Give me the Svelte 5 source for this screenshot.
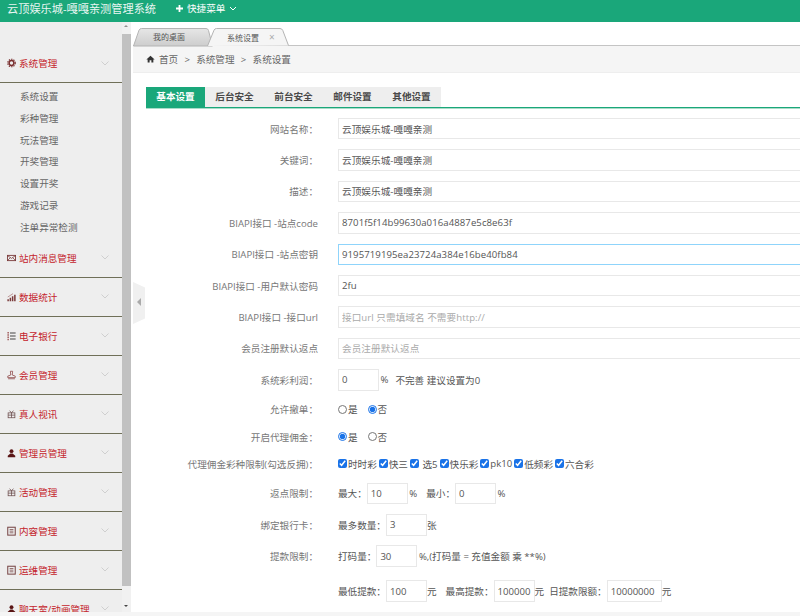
<script lang="ts">
  const menus = [
    { name: "站内消息管理", icon: "mail" },
    { name: "数据统计", icon: "chart" },
    { name: "电子银行", icon: "list" },
    { name: "会员管理", icon: "stamp" },
    { name: "真人视讯", icon: "gift" },
    { name: "管理员管理", icon: "user" },
    { name: "活动管理", icon: "gift" },
    { name: "内容管理", icon: "book" },
    { name: "运维管理", icon: "book" },
    { name: "聊天室/动画管理", icon: "user" },
  ];
  const subItems = ["系统设置", "彩种管理", "玩法管理", "开奖管理", "设置开奖", "游戏记录", "注单异常检测"];
  const formTabs = ["基本设置", "后台安全", "前台安全", "邮件设置", "其他设置"];
  const lotteries = ["时时彩", "快三", "\u00a0选5", "快乐彩", "pk10", "低频彩", "六合彩"];
  const textRows = [
    { label: "网站名称：", value: "云顶娱乐城-嘎嘎亲测" },
    { label: "关键词：", value: "云顶娱乐城-嘎嘎亲测" },
    { label: "描述：", value: "云顶娱乐城-嘎嘎亲测" },
    { label: "BIAPI接口 -站点code", value: "8701f5f14b99630a016a4887e5c8e63f" },
    { label: "BIAPI接口 -站点密钥", value: "9195719195ea23724a384e16be40fb84", focus: true },
    { label: "BIAPI接口 -用户默认密码", value: "2fu" },
    { label: "BIAPI接口 -接口url", value: "", placeholder: "接口url 只需填域名 不需要http://" },
    { label: "会员注册默认返点", value: "", placeholder: "会员注册默认返点" },
  ];
</script>

{#snippet icon(kind: string)}
  <svg class="menu-icon" viewBox="0 0 12 12" aria-hidden="true">
    {#if kind === "gear"}
      <circle cx="6" cy="6" r="3.2" fill="none" stroke="#7a3030" stroke-width="2" />
      <circle cx="6" cy="6" r="5" fill="none" stroke="#7a3030" stroke-width="1.6" stroke-dasharray="1.8 1.4" />
    {:else if kind === "mail"}
      <rect x="0.600" y="2.500" width="10.800" height="7" fill="none" stroke="#7a3a3a" stroke-width="1.200" />
      <path d="M1 3l5 3.500L11 3M1 9l3.500-3.500M11 9L7.500 5.500" fill="none" stroke="#7a3a3a" />
    {:else if kind === "chart"}
      <path d="M1.500 11.500V9M4.500 11.500V7M7.500 11.500V5M10.500 11.500V3" stroke="#7a3a3a" stroke-width="2" />
      <path d="M1 6L5 3.500 8 1.500" fill="none" stroke="#9a5a5a" stroke-width="0.800" />
    {:else if kind === "list"}
      <path d="M1.500 0.500v11" stroke="#8a3030" stroke-width="1.500" stroke-dasharray="2 1" />
      <path d="M4 2h7.500M4 6h7.500M4 10h7.500" stroke="#444" stroke-width="1.400" />
    {:else if kind === "stamp"}
      <path d="M4.500 1h3L7 6l4 1.500V9.500H1V7.500L5 6zM1.500 11h9" fill="none" stroke="#8a4040" />
    {:else if kind === "gift"}
      <rect x="1.500" y="4.500" width="9" height="6.500" fill="none" stroke="#6a4a4a" />
      <path d="M1.500 7.500h9M6 4.500V11M3.500 1.500l2.500 3 2.500-3" fill="none" stroke="#6a4a4a" />
    {:else if kind === "user"}
      <circle cx="6" cy="3.500" r="2.600" fill="#5a1515" />
      <path d="M1 11.500V9.500L4.500 6.800h3l3.500 2.700v2z" fill="#5a1515" />
    {:else}
      <rect x="1" y="1" width="10" height="10.500" fill="none" stroke="#7a4a4a" stroke-width="1.400" />
      <path d="M3.500 4h5M3.500 6.200h5M3.500 8.400h5" stroke="#7a4a4a" />
    {/if}
  </svg>
{/snippet}

{#snippet chevron()}
  <svg class="chevron" viewBox="0 0 8 5" aria-hidden="true"><path d="M.5.500L4 4 7.500.500" fill="none" stroke="#cfcfcf" /></svg>
{/snippet}

<div class="page">
  <header class="topbar">
    <span class="brand">云顶娱乐城-嘎嘎亲测管理系统</span>
    <span class="quick">
      <svg class="plus" viewBox="0 0 9 9" aria-hidden="true"><path d="M4.500 1v7M1 4.500h7" stroke="#fff" stroke-width="1.800" /></svg>
      快捷菜单
      <svg class="caret" viewBox="0 0 8 5" aria-hidden="true"><path d="M1 1l3 3 3-3" fill="none" stroke="#fff" /></svg>
    </span>
  </header>

  <div class="body">
    <aside class="sidebar">
      <div class="side-scroll">
        <div class="menu-head first">
          <span class="menu-title">{@render icon("gear")}系统管理</span>
          {@render chevron()}
        </div>
        <ul class="sub">
          {#each subItems as item}
            <li>{item}</li>
          {/each}
        </ul>
        {#each menus as menu, i}
          <div class="menu-head" class:last={i === menus.length - 1}>
            <span class="menu-title">{@render icon(menu.icon)}{menu.name}</span>
            {@render chevron()}
          </div>
        {/each}
      </div>
      <div class="scrollbar">
        <span class="arrow up"></span>
        <div class="thumb"></div>
        <span class="arrow down"></span>
      </div>
    </aside>

    <div class="gutter">
      <button class="handle" aria-label="收起"></button>
    </div>

    <main class="main">
      <div class="tabbar">
        <span class="page-tab">
          <svg class="tab-shape" viewBox="0 0 80 18" aria-hidden="true">
            <defs>
              <linearGradient id="tabGrey" x1="0" y1="0" x2="0" y2="1">
                <stop offset="0" stop-color="#e6e6e6" />
                <stop offset="1" stop-color="#cdcdcd" />
              </linearGradient>
            </defs>
            <path d="M.5 18L6 2.200Q6.800.500 8.500.500H73Q75 .500 75.500 2.500L79.500 18z" fill="url(#tabGrey)" stroke="#b4b4b4" />
          </svg>
          <span class="tab-text">我的桌面</span>
        </span>
        <span class="page-tab active">
          <svg class="tab-shape" viewBox="0 0 82 18" aria-hidden="true">
            <path d="M.5 18L7 2.200Q7.800.500 9.500.500H73Q75 .500 75.800 2.500L81.500 17.500" fill="#f5f5f5" stroke="#b4b4b4" />
          </svg>
          <span class="tab-text">系统设置</span>
          <i class="close">×</i>
        </span>
      </div>
      <div class="crumbs">
        <svg class="home" viewBox="0 0 12 10" aria-hidden="true"><path d="M6 .5L.5 5.500h1.700V9.500h2.600V6.500h2.400v3h2.600V5.500h1.700z" fill="#333" /></svg>
        <span>首页</span><b>&gt;</b><span>系统管理</span><b>&gt;</b><span>系统设置</span>
      </div>

      <div class="content">
        <div class="tabs">
          {#each formTabs as tab, i}
            <span class="tab" class:on={i === 0}>{tab}</span>
          {/each}
        </div>

        <form class="form">
          {#each textRows as row}
            <div class="row">
              <span class="label">{row.label}</span>
              <span class="field">
                <input class="box wide" class:focus={row.focus} value={row.value} placeholder={row.placeholder ?? ""} />
              </span>
            </div>
          {/each}

          <div class="row">
            <span class="label">系统彩利润：</span>
            <span class="field"><input class="box small" value="0" /><span class="pct">%</span><span class="note">不完善 建议设置为0</span></span>
          </div>
          <div class="row short">
            <span class="label">允许撤单：</span>
            <span class="field radios">
              <label><input type="radio" name="cancel" />是</label>
              <label><input type="radio" name="cancel" checked />否</label>
            </span>
          </div>
          <div class="row short">
            <span class="label">开启代理佣金：</span>
            <span class="field radios">
              <label><input type="radio" name="agent" checked />是</label>
              <label><input type="radio" name="agent" />否</label>
            </span>
          </div>
          <div class="row short">
            <span class="label">代理佣金彩种限制(勾选反拥)：</span>
            <span class="field checks">
              {#each lotteries as item}
                <label><input type="checkbox" checked />{item}</label>
              {/each}
            </span>
          </div>
          <div class="row">
            <span class="label">返点限制：</span>
            <span class="field">最大：<input class="box small" value="10" /><span class="pct">%</span><span class="gap">最小：</span><input class="box small" value="0" /><span class="pct">%</span></span>
          </div>
          <div class="row">
            <span class="label">绑定银行卡：</span>
            <span class="field">最多数量：<input class="box small" value="3" /><span>张</span></span>
          </div>
          <div class="row">
            <span class="label">提款限制：</span>
            <span class="field">打码量：<input class="box small" value="30" /><span class="pct">%,(打码量 = 充值金额 乘 **%)</span></span>
          </div>
          <div class="row last">
            <span class="label"></span>
            <span class="field">最低提款：<input class="box small" value="100" /><span>元</span><span class="gap">最高提款：</span><input class="box small" value="100000" /><span>元</span><span class="gap tight">日提款限额：</span><input class="box big" value="10000000" /><span>元</span></span>
          </div>
        </form>
      </div>
    </main>
  </div>
</div>

<style>
  :global(body) {
    margin: 0;
    background: #fff;
    overflow: hidden;
  }

  .page {
    width: 800px;
    height: 616px;
    display: flex;
    flex-direction: column;
    overflow: hidden;
    font-family: "Open Sans", "Noto Sans CJK SC", sans-serif;
    font-size: 9.6px;
    color: #555;
  }

  .topbar {
    height: 22px;
    flex-shrink: 0;
    box-sizing: border-box;
    display: flex;
    align-items: center;
    padding: 0 0 6px 7px;
    background: #1aa77a;
    color: #fff;
  }

  .brand {
    font-size: 11.200px;
    width: 168px;
    opacity: 0.9;
  }

  .quick {
    display: flex;
    align-items: center;
    gap: 3px;
  }

  .plus {
    width: 9px;
    height: 9px;
  }

  .caret {
    width: 8px;
    height: 5px;
    margin-left: 1px;
  }

  .body {
    flex: 1;
    display: flex;
    min-height: 0;
    padding-bottom: 4px;
    background: #f5f5f5;
  }

  .sidebar {
    width: 131px;
    flex-shrink: 0;
    display: flex;
    background: #eee;
  }

  .side-scroll {
    width: 122px;
    overflow: hidden;
  }

  .menu-head {
    height: 38px;
    display: flex;
    align-items: center;
    justify-content: space-between;
    padding: 0 13px 0 7px;
    border-bottom: 1px solid #6f6f58;
    color: #c4242c;
  }

  .menu-head.first {
    box-sizing: border-box;
    height: 61px;
    padding-top: 22px;
  }

  .menu-head.last {
    border-bottom: none;
  }

  .menu-title {
    display: flex;
    align-items: center;
    gap: 3px;
    white-space: nowrap;
  }

  .menu-icon {
    width: 9px;
    height: 10px;
    flex-shrink: 0;
  }

  .chevron {
    width: 8px;
    height: 5px;
  }

  .sub {
    list-style: none;
    margin: 0;
    padding: 3px 0 0 20px;
    color: #666;
  }

  .sub li {
    height: 21.800px;
    line-height: 21.800px;
  }

  .scrollbar {
    width: 9px;
    display: flex;
    flex-direction: column;
    background: #f1f1f1;
  }

  .arrow {
    height: 12px;
    flex-shrink: 0;
    position: relative;
  }

  .arrow::after {
    content: "";
    position: absolute;
    left: 2px;
    top: 4px;
    border: 2.500px solid transparent;
  }

  .arrow.up::after {
    top: 1px;
    border-bottom-color: #909090;
  }

  .arrow.down {
    margin-top: auto;
  }

  .arrow.down::after {
    top: 5px;
    border-top-color: #444;
  }

  .thumb {
    height: 552px;
    flex-shrink: 0;
    background: #c1c1c1;
  }

  .gutter {
    width: 2px;
    flex-shrink: 0;
    background: #fff;
    position: relative;
    z-index: 2;
  }

  .handle {
    position: absolute;
    left: 2px;
    top: 260px;
    width: 12px;
    height: 42px;
    padding: 0;
    border: none;
    background: #f0f0f0;
    clip-path: polygon(0 0, 100% 13%, 100% 87%, 0 100%);
  }

  .handle::after {
    content: "";
    position: absolute;
    left: 4px;
    top: 16px;
    border: 4.500px solid transparent;
    border-left-width: 0;
    border-right: 4.500px solid #aaa;
  }

  .main {
    flex: 1;
    min-width: 0;
    display: flex;
    flex-direction: column;
    background: #fff;
    overflow: hidden;
  }

  .tabbar {
    box-sizing: border-box;
    height: 24px;
    flex-shrink: 0;
    display: flex;
    align-items: flex-end;
    background: #fff;
    border-bottom: 1px solid #c4c4c4;
  }

  .page-tab {
    position: relative;
    height: 18px;
    width: 80px;
    margin-bottom: -1px;
    flex-shrink: 0;
    font-size: 8px;
    line-height: 18px;
    color: #555;
  }

  .page-tab.active {
    width: 82px;
    margin-left: -6px;
  }

  .tab-shape {
    position: absolute;
    left: 0;
    top: 0;
    width: 100%;
    height: 100%;
    overflow: visible;
  }

  .tab-text {
    position: relative;
    margin-left: 20px;
  }

  .close {
    position: relative;
    font-style: normal;
    color: #aaa;
    margin-left: 8px;
    font-size: 10px;
  }

  .crumbs {
    height: 26px;
    flex-shrink: 0;
    display: flex;
    align-items: center;
    padding-left: 13px;
    background: #f5f5f5;
    border-bottom: 1px solid #eee;
    color: #666;
  }

  .crumbs b {
    font-weight: 400;
    width: 18px;
    text-align: center;
  }

  .home {
    width: 9px;
    height: 8px;
    margin-right: 4px;
  }

  .content {
    flex: 1;
    padding: 14px 0 0 13px;
    background: #fff;
  }

  .tabs {
    width: 660px;
    height: 20px;
    display: flex;
    border-bottom: 1px solid #1aa77a;
    box-shadow: 0 1px 0 #a9dcc9;
  }

  .tab {
    width: 59px;
    line-height: 20px;
    text-align: center;
    font-weight: 600;
    background: #eee;
    color: #4a4a4a;
  }

  .tab.on {
    background: #1aa77a;
    color: #fff;
  }

  .form {
    width: 680px;
    padding-top: 5px;
  }

  .row {
    display: flex;
    align-items: center;
    height: 31.400px;
  }

  .row.short {
    height: 27.400px;
  }

  .row.last {
    margin-top: 3.500px;
  }

  .label {
    width: 192px;
    flex-shrink: 0;
    box-sizing: border-box;
    padding-right: 20px;
    text-align: right;
    color: #777;
    white-space: nowrap;
  }

  .field {
    display: flex;
    align-items: center;
    white-space: nowrap;
    min-width: 0;
  }

  .box {
    font: inherit;
    height: 21.500px;
    box-sizing: border-box;
    padding: 0 3px;
    border: 1px solid #e8e8e8;
    outline: none;
    color: #555;
    background: #fff;
  }

  .box::placeholder {
    color: #aaa;
  }

  .wide {
    width: 480px;
    letter-spacing: 0.07px;
  }

  .wide.focus {
    border-color: #8fd4fb;
  }

  .small {
    width: 41px;
  }

  .big {
    width: 55px;
  }

  .pct {
    margin-left: 1.500px;
  }

  .note {
    margin-left: 7px;
  }

  .gap {
    margin-left: 9px;
  }

  .gap.tight {
    margin-left: 5px;
  }

  .radios label {
    display: flex;
    align-items: center;
    margin-right: 10px;
  }

  .radios input,
  .checks input {
    margin: 0 1px 0 0;
    width: 9px;
    height: 9px;
    accent-color: #1a73e8;
  }

  .checks label {
    display: flex;
    align-items: center;
    margin-right: 2px;
  }
</style>
